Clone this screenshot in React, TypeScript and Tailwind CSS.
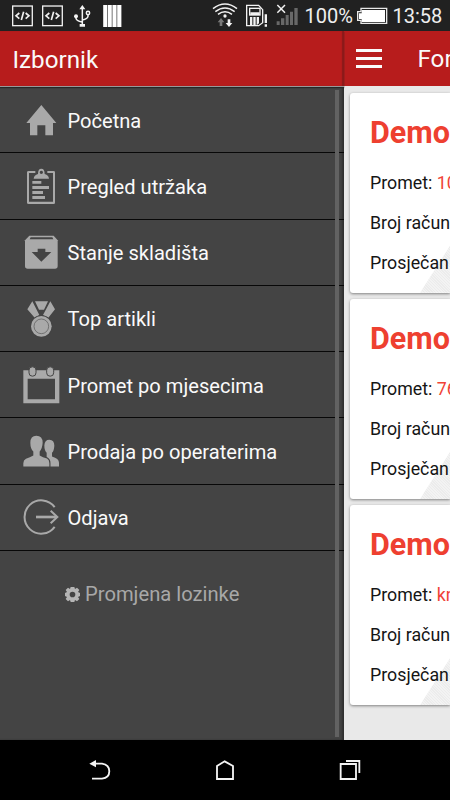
import React from "react";

const G = "#a9a9a9";

const HomeIcon = () => (
  <svg viewBox="63 29 120 120" className="size-10" fill={G}>
    <path d="M124 44 169 98H159V135H136V105H112V135H90V98H79Z" />
  </svg>
);
const ClipboardIcon = () => (
  <svg viewBox="63 228 120 120" className="size-10" fill={G}>
    <path fillRule="evenodd" d="M86 243H106V249H87V335H159V249H142V243H161Q165 243 165 247V338Q165 342 161 342H86Q81 342 81 338V247Q81 243 86 243Z" />
    <path fillRule="evenodd" d="M101 266Q102 255 114 252Q114 236 124 236Q134 236 134 252Q146 255 147 266ZM124 242A5 5 0 1 0 124 252A5 5 0 1 0 124 242Z" />
    <path d="M97 273H124V281H97ZM97 288H147V297H97ZM97 303H129V312H97ZM97 318H135V327H97Z" />
  </svg>
);
const ArchiveIcon = () => (
  <svg viewBox="63 37 120 120" className="size-10">
    <path fill={G} d="M88 48H161L173 62V139Q173 147 165 147H83Q75 147 75 139V62Z" />
    <path fill="#444" d="M92 53H157L160 59H89ZM113 87H136V97H154L124 126 95 97H113Z" />
  </svg>
);
const MedalIcon = () => (
  <svg viewBox="63 236 120 120" className="size-10">
    <path fill={G} d="M97 243 118 284 104 292 82 267ZM151 243 129 284 145 292 165 267ZM105 243H144L132 268H117Z" />
    <circle cx="124" cy="318" r="33.500" fill="#444" />
    <circle cx="124" cy="318" r="31" fill={G} />
    <circle cx="124" cy="318" r="22" fill="none" stroke="#555" strokeWidth="2" />
  </svg>
);
const CalendarIcon = () => (
  <svg viewBox="63 44.5 120 120" className="size-10">
    <path fill={G} fillRule="evenodd" d="M70 60H178V159H70ZM83 86V147H165V86Z" />
    <g fill={G} stroke="#444" strokeWidth="3">
      <rect x="87" y="50" width="21" height="28" rx="10" />
      <rect x="140" y="50" width="21" height="28" rx="10" />
    </g>
  </svg>
);
const UsersIcon = () => (
  <svg viewBox="63 243.5 120 120" className="size-10">
    <path fill={G} d="M148 270Q163 270 163 288Q162 304 156 309V320Q177 326 177 339V350H140V320V309Q133 302 133 287Q134 270 148 270Z" />
    <path fill={G} stroke="#444" strokeWidth="7" paintOrder="stroke" d="M109 258Q128 258 128 279Q127 296 119 305V317Q128 323 141 326Q148 330 148 340V350H70V340Q70 331 78 327Q90 322 100 317V305Q91 297 91 279Q91 258 109 258Z" />
  </svg>
);
const LogoutIcon = () => (
  <svg viewBox="63 52.5 120 120" className="size-10" fill="none" stroke={G}>
    <path d="M164 83A50 50 0 1 0 164 142" strokeWidth="6" />
    <path d="M108 112.500H170" strokeWidth="8" />
    <path d="M152 94 172 112.500 152 131" strokeWidth="6" />
  </svg>
);

const items = [
  { label: "Početna", Icon: HomeIcon },
  { label: "Pregled utržaka", Icon: ClipboardIcon },
  { label: "Stanje skladišta", Icon: ArchiveIcon },
  { label: "Top artikli", Icon: MedalIcon },
  { label: "Promet po mjesecima", Icon: CalendarIcon },
  { label: "Prodaja po operaterima", Icon: UsersIcon },
  { label: "Odjava", Icon: LogoutIcon },
];

const DevIcon = () => (
  <svg viewBox="36 14 64 66" className="h-[22px] w-[21.300px]" fill="none" stroke="#f0f0f0">
    <rect x="38" y="17" width="59" height="59" strokeWidth="4" />
    <path d="M58 38 48 46.500 58 55M77 38 87 46.500 77 55M71 34 64 59" strokeWidth="5" />
  </svg>
);

function StatusBar() {
  return (
    <div className="flex h-[31px] shrink-0 items-start bg-[#212121] pl-3 text-[#efefef]">
      <div className="flex w-[200px] items-start pt-[4.700px]">
        <DevIcon />
        <div className="w-[8.700px]" />
        <DevIcon />
        <svg viewBox="220 14 54 68" className="ml-[10px] h-[22.700px] w-[18px]" fill="none" stroke="#f4f4f4" strokeWidth="4.500">
          <path d="M248 24V72M229 49V54Q230 61 247 65M265 42V48Q264 55 248 59" />
          <circle cx="229" cy="48" r="6" fill="#f4f4f4" stroke="none" />
          <circle cx="265" cy="38" r="5" />
          <path d="M239 27 248 14 257 27ZM240 71H256V79H240Z" fill="#f4f4f4" stroke="none" />
        </svg>
        <svg viewBox="309 14 57 66" className="ml-[12px] h-[22px] w-[19px]">
          <path d="M309 14H366V80H309Z" fill="#777" />
          <path d="M310 14H321V80H310ZM324 14H335V80H324ZM338 14H349V80H338ZM352 14H363V80H352Z" fill="#fff" />
        </svg>
      </div>
      <svg viewBox="-39 0 264 93" className="h-[31px] w-[88px]" fill="none">
        <g stroke="#f2f2f2" strokeWidth="4.500">
          <path d="M-36 26Q0 -2 36 26M-29 35Q0 13 29 35M-21 43Q0 27 21 43" />
        </g>
        <circle cx="0" cy="48" r="5" fill="#f2f2f2" />
        <path d="M-12 54-2 67H-8V78H-16V67H-22Z" fill="#777" />
        <path d="M8 58H16V69H22L12 81 2 69H8Z" fill="#f2f2f2" />
        <path d="M65 16H101L113 29V68L101 77H65Z" stroke="#f2f2f2" strokeWidth="4" />
        <rect x="74" y="25" width="31" height="20" stroke="#f2f2f2" strokeWidth="4" />
        <path d="M76 37H104V45H76ZM75 51H82V76H75ZM85 51H92V76H85ZM95 51H102V70L95 76Z" fill="#f2f2f2" />
        <path d="M119 43H126V69H119ZM119 73H126V80H119Z" fill="#f2f2f2" />
        <path d="M157 15 180 38M180 15 157 38" stroke="#f2f2f2" strokeWidth="4.500" />
        <path d="M155 64H164V75H155ZM168 55H178V75H168ZM182 45H191V75H182ZM195 35H204V75H195ZM208 24H218V75H208Z" fill="#686868" />
      </svg>
      <span className="ml-[4.500px] w-[51px] whitespace-nowrap text-[20px] leading-[33px]">100%</span>
      <svg viewBox="393 20 99 54" className="mt-[6.700px] h-[18px] w-[33px]">
        <path d="M408 24H485V69H408V60H398V34H408Z" fill="none" stroke="#e8e8e8" strokeWidth="4" />
        <path d="M410 29H480V65H410V56H402V39H410Z" fill="#fff" />
      </svg>
      <span className="ml-[4px] whitespace-nowrap text-[20px] leading-[33px]">13:58</span>
    </div>
  );
}

function Card({ value }: { value: string }) {
  return (
    <div className="relative h-[199.700px] shrink-0 rounded-l-[3px] bg-white pl-[20px] shadow-[0_1px_3px_rgba(0,0,0,0.45)]">
      <div className="absolute right-0 bottom-0 h-[51px] w-[30px] bg-[repeating-linear-gradient(45deg,#f3f3f3_0_1px,#ececec_1px_2px)] [clip-path:polygon(0_100%,100%_8%,100%_100%)]" />
      <h2 className="relative pt-[20px] h-[70px] text-[30.500px] leading-[40px] font-bold text-[#ee4030]">Demo</h2>
      <div className="relative text-[17.800px] leading-[40px] whitespace-nowrap text-[#151515]">
        <p>Promet: <span className="text-[#f04438]">{value}</span></p>
        <p>Broj račun</p>
        <p>Prosječan</p>
      </div>
    </div>
  );
}

export default function App() {
  return (
    <div className="flex h-[800px] w-[450px] flex-col overflow-hidden bg-black font-[Roboto,sans-serif]">
      <StatusBar />
      <div className="flex h-[709px] min-h-0">
        <aside className="relative flex w-[344px] shrink-0 flex-col bg-[#444] shadow-[inset_-2px_0_2px_rgba(0,0,0,0.3)]">
          <header className="h-[56px] shrink-0 border-b border-[#999] bg-[#b71c1c] pl-[12.500px] text-[24.200px] leading-[58px] text-[#fafafa] shadow-[0_1px_1px_#282828,inset_-2px_0_1px_rgba(40,20,20,0.3)]">
            Izbornik
          </header>
          <nav>
            {items.map(({ label, Icon }) => (
              <div key={label} className="flex h-[66.300px] items-center border-b border-[#080808] pl-[21px] text-[20.100px] text-[#fafafa]">
                <Icon />
                <span className="ml-[6.500px] pt-[2px] whitespace-nowrap">{label}</span>
              </div>
            ))}
          </nav>
          <div className="mt-[31px] flex h-6 items-center pl-[65px] text-[20.200px] text-[#a8a8a8]">
            <svg viewBox="195 319 45 45" className="size-[15px]">
              <path fillRule="evenodd" fill="#b5b5b5" d="M212 319H223L225 325 231 321 238 328 234 334 240 337V346L234 349 238 355 231 362 225 358 223 364H212L210 358 204 362 197 355 201 349 195 346V337L201 334 197 328 204 321 210 325ZM217.500 333A8.500 8.500 0 1 0 217.500 350A8.500 8.500 0 1 0 217.500 333Z" />
            </svg>
            <span className="ml-[5px]">Promjena lozinke</span>
          </div>
          <div className="absolute top-[59px] right-[5px] bottom-[3px] w-[4px] bg-[#626262]" />
        </aside>
        <main className="flex min-w-0 flex-1 flex-col overflow-hidden bg-[#e9e9e9]">
          <header className="flex h-[55px] shrink-0 items-center bg-[#b71c1c] pl-[12px] text-[24.200px] text-[#fafafa]">
            <div className="flex w-[26px] shrink-0 flex-col gap-[5px]">
              <div className="h-[3px] bg-[#fafafa]" />
              <div className="h-[3px] bg-[#fafafa]" />
              <div className="h-[3px] bg-[#fafafa]" />
            </div>
            <span className="ml-[35.500px] pt-[2px]">For</span>
          </header>
          <div className="flex flex-col gap-[6.500px] pt-[7px] pl-[6px]">
            <Card value="10" />
            <Card value="76" />
            <Card value="kn" />
          </div>
        </main>
      </div>
      <div className="flex h-[60px] shrink-0 items-start bg-black pt-[19px] pl-[88px]">
        <svg viewBox="114 87 70 66" className="h-[22px] w-[23.300px]" fill="none" stroke="#f4f4f4">
          <path d="M130 101H156Q178 104 178 124Q178 144 156 146H126" strokeWidth="5.500" />
          <path d="M118 101 138 90V112Z" fill="#f4f4f4" stroke="none" />
        </svg>
        <svg viewBox="492 87 66 66" className="ml-[102.700px] h-[22px] w-[22px]" fill="none" stroke="#f4f4f4" strokeWidth="5.500">
          <path d="M501 108 524 94 549 108V147H501Z" />
        </svg>
        <svg viewBox="864 87 72 66" className="ml-[102px] h-[22px] w-[24px]" fill="none" stroke="#f4f4f4" strokeWidth="5.500">
          <path d="M872 102H918V147H872ZM888 93H928V129" />
        </svg>
      </div>
    </div>
  );
}
